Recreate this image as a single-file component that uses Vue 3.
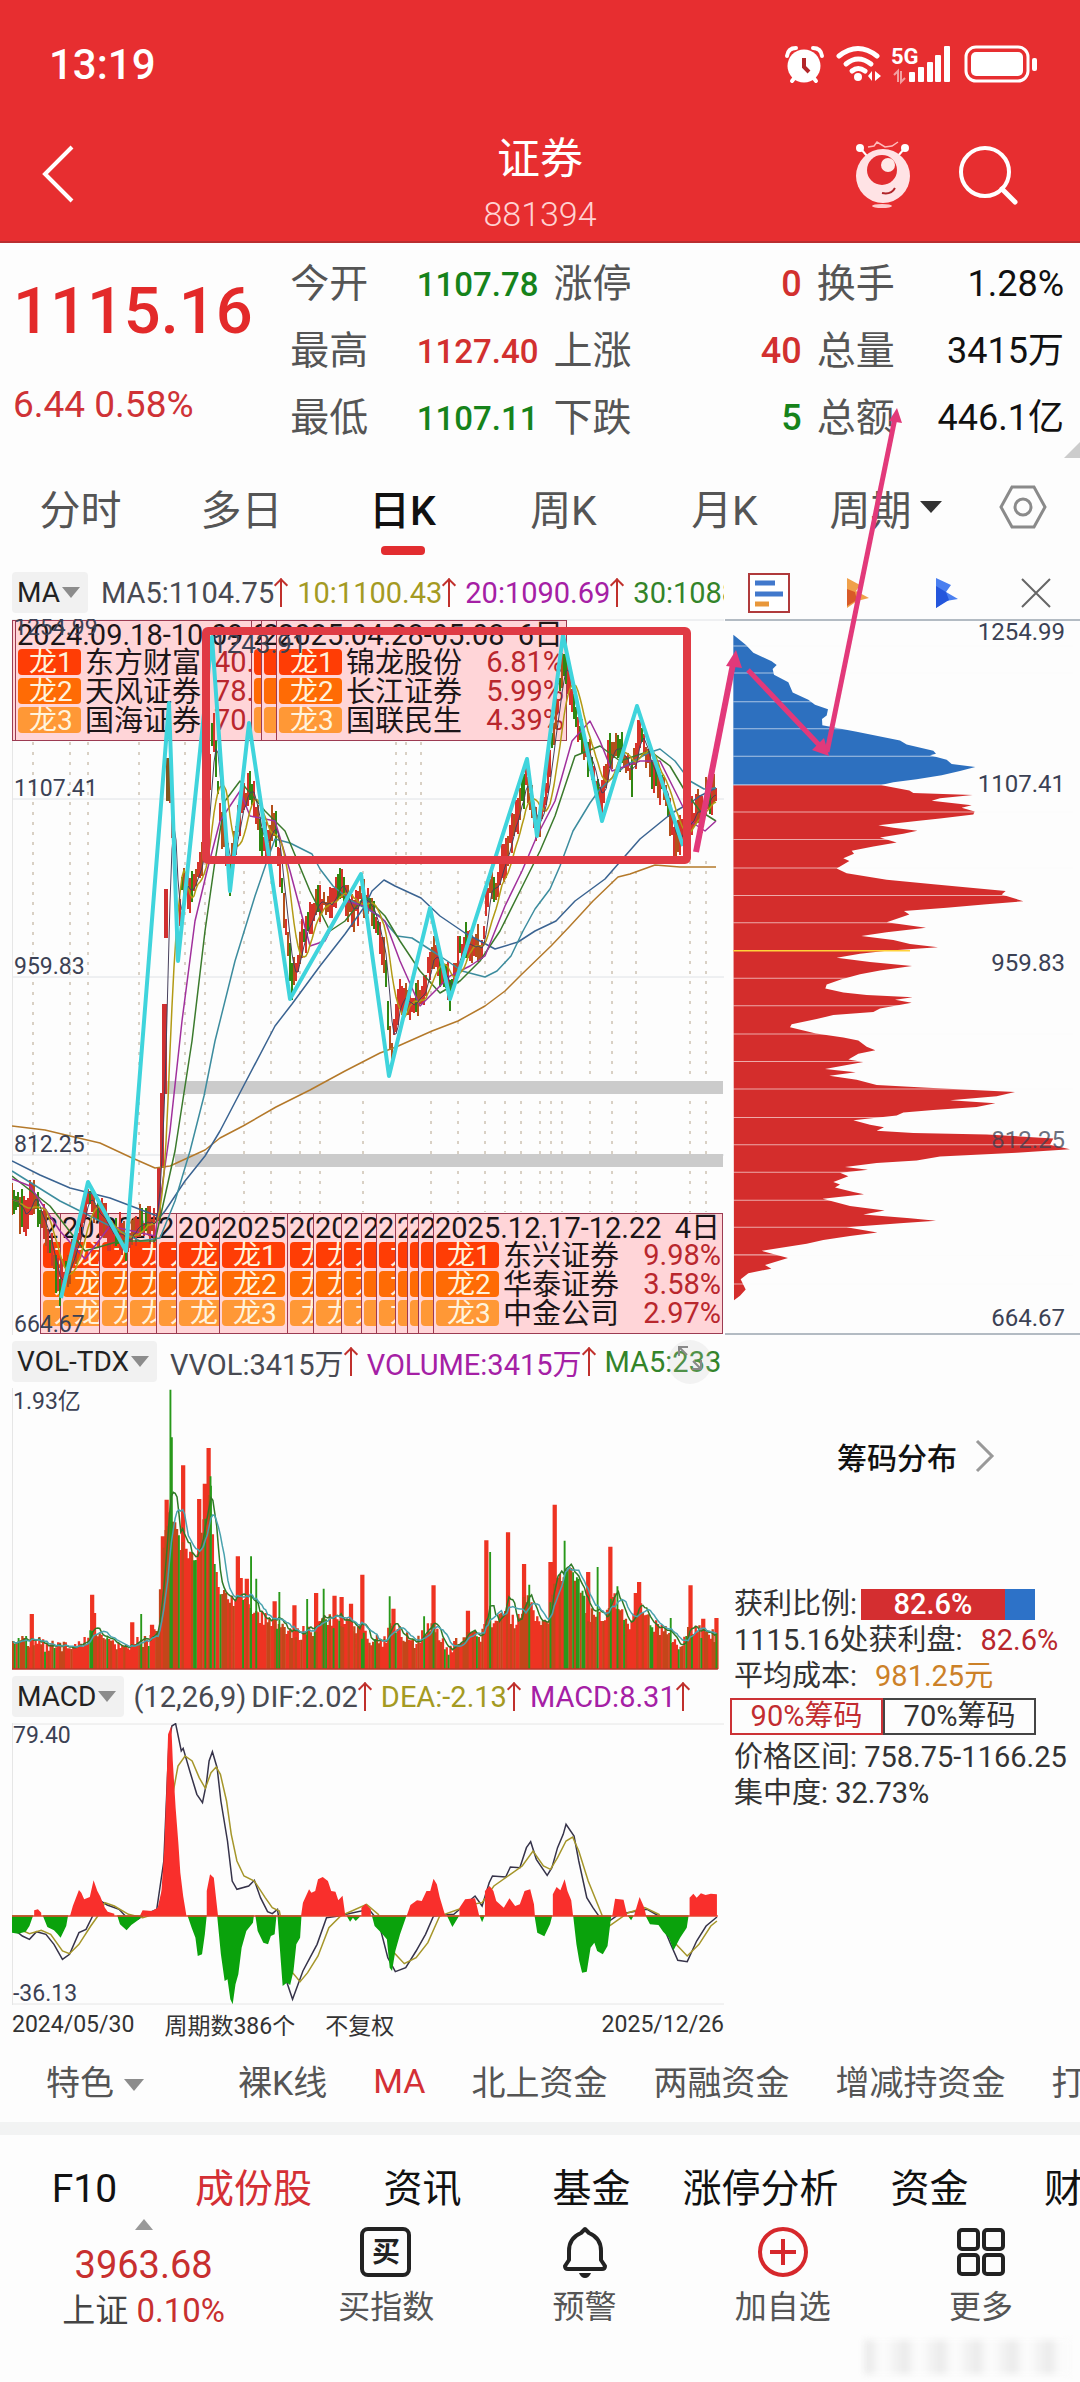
<template>
  <div class="page">
    <header class="topbar">
      <div class="status">
        <span class="clock">13:19</span>
        <svg class="status-icons" viewBox="780 40 260 46" aria-hidden="true">
          <g fill="#fff" stroke="none">
            <circle cx="802" cy="65" r="16.5" />
            <path d="M785 55q1-8 9-8M811 47q8 0 9 8M790 80l4-5M814 80l-4-5" fill="none" stroke="#fff" stroke-width="4" stroke-linecap="round" />
            <path d="M802 57v9l5 5" fill="none" stroke="#b3272a" stroke-width="4" />
            <g fill="none" stroke="#fff" stroke-width="5" stroke-linecap="round">
              <path d="M837 55q19-15 38 0" />
              <path d="M844 63q12-10 25 0" />
              <path d="M850 70q6-5 13 0" />
            </g>
            <circle cx="856" cy="76" r="4" />
            <path d="M866 75l4-5v10zM873 70v10l6-5z" />
            <path d="M892 74l4-4v11M899 70v11l4-4" fill="none" stroke="#f2a0a0" stroke-width="2" />
            <rect x="907" y="71" width="6" height="10" rx="1" />
            <rect x="916" y="66" width="6" height="15" rx="1" />
            <rect x="925" y="61" width="6" height="20" rx="1" />
            <rect x="933" y="54" width="6" height="27" rx="1" />
            <rect x="942" y="45" width="6" height="36" rx="1" />
            <rect x="964" y="46" width="62" height="34" rx="10" fill="none" stroke="#fff" stroke-width="3" />
            <rect x="969" y="51" width="52" height="24" rx="5" />
            <rect x="1030" y="57" width="5" height="13" rx="2" />
          </g>
          <text x="889" y="63" font-size="22" font-weight="700" fill="#fff">5G</text>
        </svg>
      </div>
      <nav class="titlebar">
        <button type="button" class="icon-btn" aria-label="返回">
          <svg width="36" height="60" viewBox="0 0 36 60"><path d="M31 3L4 30l27 27" fill="none" stroke="#fff" stroke-width="4" /></svg>
        </button>
        <h1 class="title">证券<small>881394</small></h1>
        <div class="title-actions">
          <button type="button" class="icon-btn" aria-label="助手">
            <svg width="58" height="72" viewBox="853 138 58 72">
              <circle cx="859" cy="148" r="4" fill="#fff" />
              <circle cx="904" cy="148" r="4" fill="#fff" />
              <path d="M860 149l6 7M903 149l-6 7" stroke="#fff" stroke-width="2" />
              <path d="M867 147l6-1 3-4 8 5 7-1 6-4" fill="none" stroke="#fbb" stroke-width="1.5" />
              <circle cx="882" cy="176" r="27" fill="#ffe3e5" />
              <circle cx="881" cy="170" r="15" fill="#e22d30" />
              <circle cx="887" cy="165" r="7" fill="#ffe9e6" />
              <path d="M881 193q9 2 13-5" fill="none" stroke="#b02428" stroke-width="2" />
              <ellipse cx="881" cy="206" rx="10" ry="2" fill="#ffc9cb" />
            </svg>
          </button>
          <button type="button" class="icon-btn" aria-label="搜索">
            <svg width="60" height="62" viewBox="957 143 60 62">
              <circle cx="984" cy="172" r="24" fill="none" stroke="#fff" stroke-width="4" />
              <path d="M1001 189l13 13" stroke="#fff" stroke-width="5" stroke-linecap="round" />
            </svg>
          </button>
        </div>
      </nav>
    </header>

    <section class="quote">
      <div class="price">
        <strong>1115.16</strong>
        <span>6.44 0.58%</span>
      </div>
      <dl v-for="(col, i) in quotes" :key="i" :class="{ large: i > 0 }">
        <div v-for="q in col" :key="q.label">
          <dt>{{ q.label }}</dt>
          <dd :class="q.tone">{{ q.value }}</dd>
        </div>
      </dl>
      <i class="corner"></i>
    </section>

    <nav class="periods">
      <button v-for="p in periods" :key="p" type="button" :class="{ active: p === period }" @click="period = p">
        {{ p }}<i v-if="p === '周期'" class="caret dark"></i>
      </button>
      <button type="button" aria-label="设置">
        <svg width="48" height="44" viewBox="0 0 48 44" fill="none" stroke="#8a8a8a" stroke-width="3">
          <path d="M13 2h22l11 20-11 20H13L2 22z" />
          <circle cx="24" cy="22" r="8" />
        </svg>
      </button>
    </nav>

    <main class="board">
      <div class="charts">
        <div class="indicator">
          <button type="button" class="chip">MA<i class="caret"></i></button>
          <span v-for="m in maValues" :key="m.text" :class="m.tone">{{ m.text }}<i class="up"></i></span>
        </div>

        <svg class="chart" viewBox="12 618 712 716" role="img" aria-label="日K">
          <path d="M12 619H724M12 798H724M12 976H724M12 1154H724" stroke="#dfe2e6" />
          <path d="M12.5 619V1334" stroke="#e6e6e6" />
          <path :d="dotted" stroke="#b5a48c" stroke-dasharray="3 7" />
          <path :d="dottedShort" stroke="#b5a48c" stroke-dasharray="3 7" />
          <rect x="165" y="1080" width="558" height="13" fill="#cbcbcb" />
          <rect x="175" y="1153" width="548" height="13" fill="#cbcbcb" />

          <svg v-for="(c, i) in cells" :key="i" :x="c.x" :y="c.y" :width="c.w" height="121">
            <rect x="0.5" y="0.5" :width="c.w - 1" height="120" fill="#ffd5d8" stroke="#9c3b52" />
            <text v-if="c.date" x="2" y="25" class="cell-date">{{ c.date }}</text>
            <text v-if="c.days" x="287" y="25" class="cell-date end">{{ c.days }}</text>
            <g v-for="(color, n) in badgeColors" :key="n">
              <rect x="3" :y="29 + n * 29" width="63" height="26" rx="4" :fill="color" />
              <text v-if="c.w > 18" x="14" :y="52 + n * 29" class="cell-badge">龙{{ c.w > 45 ? n + 1 : '' }}</text>
              <template v-if="c.rows">
                <text x="70" :y="53 + n * 29" class="cell-name">{{ c.rows[n][0] }}</text>
                <text :x="c.pctX" :y="52 + n * 29" class="cell-pct" :class="{ end: c.days }">{{ c.rows[n][1] }}</text>
              </template>
            </g>
          </svg>

          <path :d="candles.up" stroke="#d6332b" stroke-width="2" />
          <path :d="candles.mid" stroke="#b4501b" stroke-width="2" />
          <path :d="candles.down" stroke="#2f8712" stroke-width="2" />
          <g fill="#cf2f30">
            <rect x="157" y="1166" width="4" height="54" />
            <rect x="160" y="1092" width="4" height="75" />
            <rect x="162" y="1003" width="5" height="90" />
            <rect x="164" y="888" width="4" height="49" />
            <rect x="166" y="757" width="4" height="43" fill="#80561e" />
          </g>
          <g fill="none" stroke-width="1.5" stroke-linejoin="round">
            <polyline v-for="l in maLines" :key="l.color" :points="l.points" :stroke="l.color" />
            <polyline :points="ma10" stroke="#b29a14" />
            <polyline :points="ma5" stroke="#47405c" stroke-width="1" />
            <polyline
              points="61,1297 88,1181 126,1250 169,702 178,960 212,636 230,890 249,722 290,998 361,873 389,1075 430,907 450,998 527,758 537,835 563,634 602,820 637,705 683,845"
              stroke="#3fd4dc" stroke-width="4"
            />
          </g>

          <g class="axis">
            <text x="14" y="634">1254.99</text>
            <text x="14" y="795">1107.41</text>
            <text x="14" y="973">959.83</text>
            <text x="14" y="1151">812.25</text>
            <text x="14" y="1331">664.67</text>
            <text x="212" y="652" font-size="26">1243.91</text>
          </g>
          <rect x="206" y="630" width="481" height="229" rx="2" fill="none" stroke="#e03a44" stroke-width="8" />
        </svg>

        <div class="indicator">
          <button type="button" class="chip">VOL-TDX<i class="caret"></i></button>
          <span class="slate">VVOL:3415万<i class="up"></i></span>
          <span class="purple">VOLUME:3415万<i class="up"></i></span>
          <span class="green">MA5:233</span>
          <button type="button" class="expand" aria-label="全屏">
            <svg width="28" height="28" viewBox="0 0 28 28" fill="none" stroke="#888" stroke-width="2">
              <path d="M3 12V3h9M3 3l8 8M25 16v9h-9M25 25l-8-8" />
            </svg>
          </button>
        </div>

        <svg class="chart" viewBox="0 0 712 282" role="img" aria-label="成交量">
          <path d="M0.5 0V282" stroke="#e6e6e6" />
          <svg width="712" height="282" viewBox="23 170 1510 846" preserveAspectRatio="none">
            <path :d="volume.up" stroke="#ee3322" stroke-width="5" />
            <path :d="volume.mid" stroke="#c4461a" stroke-width="5" />
            <path :d="volume.down" stroke="#28981a" stroke-width="4" />
            <path d="M23 1013H1520" stroke="#b8352a" stroke-width="4" />
            <g fill="none" stroke-width="1.5">
              <polyline :points="volume.ma5" stroke="#2f7a26" vector-effect="non-scaling-stroke" />
              <polyline :points="volume.ma10" stroke="#49a2ae" vector-effect="non-scaling-stroke" />
            </g>
          </svg>
          <text x="1" y="21" class="axis">1.93亿</text>
        </svg>

        <div class="indicator">
          <button type="button" class="chip">MACD<i class="caret"></i></button>
          <span class="slate tight">(12,26,9)</span>
          <span class="slate tight">DIF:2.02<i class="up"></i></span>
          <span class="olive">DEA:-2.13<i class="up"></i></span>
          <span class="purple">MACD:8.31<i class="up"></i></span>
        </div>

        <svg class="chart" viewBox="0 0 712 282" role="img" aria-label="MACD">
          <path d="M0 1H712M0 281H712M0.5 0V282" stroke="#e6e6e6" />
          <svg width="712" height="282" viewBox="23 186 1510 846" preserveAspectRatio="none">
            <g fill="none" stroke-width="1.5">
              <polyline
                v-for="(l, i) in macdLines" :key="i" :points="l.points" :stroke="l.color"
                vector-effect="non-scaling-stroke"
              />
            </g>
            <path :d="macdRed" fill="#f92f2c" />
            <path :d="macdGreen" fill="#0aa20c" />
            <path d="M23 765H1520" stroke="#e9402c" stroke-width="5" />
          </svg>
          <g class="axis">
            <text x="1" y="20">79.40</text>
            <text x="1" y="278">-36.13</text>
          </g>
        </svg>

        <div class="dates">
          <span>2024/05/30</span>
          <span>周期数386个</span>
          <span>不复权</span>
          <span class="last">2025/12/26</span>
        </div>
      </div>

      <aside class="chips-panel">
        <div class="chip-tools">
          <button type="button" aria-label="筹码">
            <svg width="42" height="40" viewBox="0 0 42 40">
              <rect x="1" y="1" width="40" height="38" fill="#fff" stroke="#b03a3c" stroke-width="2" />
              <path d="M7 10h20M7 21h28" stroke="#4178cc" stroke-width="5" />
              <path d="M7 31h14" stroke="#e8973a" stroke-width="5" />
            </svg>
          </button>
          <button type="button" aria-label="橙色标记">
            <svg width="22" height="30" viewBox="0 0 22 30"><path d="M0 0l13 7-4 6 13 7-12 3-10 7z" fill="#f0a04a" /><path d="M0 11l8 3 2 8-10 6z" fill="#d85a28" /></svg>
          </button>
          <button type="button" aria-label="蓝色标记">
            <svg width="22" height="30" viewBox="0 0 22 30"><path d="M0 0l15 7-5 7 12 7-12 2-10 7z" fill="#4a7ff0" /><path d="M0 8l10 6 3 8-13 8z" fill="#2456dc" /></svg>
          </button>
          <button type="button" aria-label="关闭">
            <svg width="30" height="30" viewBox="0 0 30 30"><path d="M1 1l28 28M29 1L1 29" stroke="#666" stroke-width="2" /></svg>
          </button>
        </div>

        <svg class="chart" viewBox="724 618 356 716" role="img" aria-label="筹码分布">
          <path d="M725 619H1080M725 1333H1080" stroke="#9aa5b0" stroke-width="1.5" />
          <svg x="724" y="618" width="356" height="716" viewBox="72 114 1068 1403" preserveAspectRatio="none">
            <path :d="profileBlue" fill="#2d70bf" />
            <path :d="profileRed" fill="#d42d2c" />
            <path :d="profileGrid" stroke="#fdfdfd" stroke-width="2" stroke-opacity="0.6" />
            <path d="M100 764H630" stroke="#ffd23a" stroke-width="3" />
          </svg>
          <g class="axis wide end">
            <text x="1065" y="639">1254.99</text>
            <text x="1065" y="791">1107.41</text>
            <text x="1065" y="970">959.83</text>
            <text x="1065" y="1147" fill-opacity="0.75">812.25</text>
            <text x="1065" y="1325">664.67</text>
          </g>
        </svg>

        <a href="#" class="panel-link">筹码分布
          <svg width="20" height="34" viewBox="0 0 20 34"><path d="M2 2l15 15L2 32" fill="none" stroke="#999" stroke-width="3" /></svg>
        </a>

        <div class="stats">
          <p class="ratio">获利比例:<span class="bar"><b :style="{ width: profit + '%' }">{{ profit }}%</b></span></p>
          <p>1115.16处获利盘:<em class="crimson">82.6%</em></p>
          <p>平均成本:<em class="amber">981.25元</em></p>
          <div class="toggle">
            <button v-for="r in [90, 70]" :key="r" type="button" :class="{ on: r === range }" @click="range = r">{{ r }}%筹码</button>
          </div>
          <p>价格区间: 758.75-1166.25</p>
          <p>集中度: 32.73%</p>
        </div>
      </aside>
    </main>

    <nav class="features">
      <button type="button" class="first">特色<i class="caret"></i></button>
      <button v-for="f in features" :key="f" type="button" :class="{ active: f === 'MA' }">{{ f }}</button>
    </nav>

    <nav class="sections">
      <a v-for="s in sections" :key="s" href="#" :class="{ active: s === '成份股' }">{{ s }}</a>
    </nav>

    <footer class="bottom">
      <a href="#" class="index">
        <i class="tri"></i>
        <strong>3963.68</strong>
        <span>上证 <b>0.10%</b></span>
      </a>
      <button type="button">
        <svg width="52" height="52" viewBox="0 0 52 52">
          <rect x="2" y="3" width="47" height="46" rx="6" fill="none" stroke="#222" stroke-width="4" />
          <text x="26" y="36" text-anchor="middle" font-size="28" font-weight="700" fill="#222">买</text>
        </svg>
        买指数
      </button>
      <button type="button">
        <svg width="52" height="52" viewBox="0 0 52 52">
          <path d="M26 3l4 4q12 5 12 18v9l4 6q0 3-3 3H9q-3 0-3-3l4-6v-9q0-13 12-18z" fill="none" stroke="#222" stroke-width="4" stroke-linejoin="round" />
          <path d="M20 47h12q-2 5-6 5t-6-5z" fill="#222" />
        </svg>
        预警
      </button>
      <button type="button">
        <svg width="52" height="52" viewBox="0 0 52 52" fill="none" stroke="#d6282c" stroke-width="4">
          <circle cx="26" cy="26" r="23" />
          <path d="M13 26h26M26 13v26" />
        </svg>
        加自选
      </button>
      <button type="button">
        <svg width="52" height="52" viewBox="0 0 52 52" fill="none" stroke="#222" stroke-width="4">
          <rect x="4" y="4" width="19" height="19" rx="3" />
          <rect x="29" y="4" width="19" height="19" rx="3" />
          <rect x="4" y="29" width="19" height="19" rx="3" />
          <rect x="29" y="29" width="19" height="19" rx="3" />
        </svg>
        更多
      </button>
      <i class="smudge"></i>
    </footer>

    <!-- hand-drawn trend arrows lying over the page -->
    <svg class="marks" viewBox="0 0 1080 900" aria-hidden="true">
      <g fill="none" stroke="#e2397a">
        <path d="M696 852L733 664" stroke-width="6" />
        <path d="M748 670L822 748" stroke-width="5" />
        <path d="M827 752L895 418" stroke-width="5" />
      </g>
      <g fill="#e2397a">
        <path d="M736 650l6 18-16-2z" />
        <path d="M829 756l-17-6 12-12z" />
        <path d="M897 408l5 15-13-2z" />
      </g>
    </svg>
  </div>
</template>

<script setup>
import { ref } from 'vue';

const period = ref('日K');
const range = ref(90);
const profit = ref(82.6);

const periods = ['分时', '多日', '日K', '周K', '月K', '周期'];
const features = ['裸K线', 'MA', '北上资金', '两融资金', '增减持资金', '打'];
const sections = ['F10', '成份股', '资讯', '基金', '涨停分析', '资金', '财'];

const quotes = [
  [
    { label: '今开', value: '1107.78', tone: 'down' },
    { label: '最高', value: '1127.40', tone: 'rise' },
    { label: '最低', value: '1107.11', tone: 'down' }
  ],
  [
    { label: '涨停', value: '0', tone: 'rise' },
    { label: '上涨', value: '40', tone: 'rise' },
    { label: '下跌', value: '5', tone: 'down' }
  ],
  [
    { label: '换手', value: '1.28%', tone: '' },
    { label: '总量', value: '3415万', tone: '' },
    { label: '总额', value: '446.1亿', tone: '' }
  ]
];

const maValues = [
  { text: 'MA5:1104.75', tone: 'slate' },
  { text: '10:1100.43', tone: 'olive' },
  { text: '20:1090.69', tone: 'purple' },
  { text: '30:1088', tone: 'green' }
];

const badgeColors = ['#ff3d05', '#ff6b05', '#ff9836'];

// leader-board cells: later cells cover the right part of earlier ones
const topCells = [
  { x: 12, w: 4, date: '' },
  {
    x: 15, w: 237, date: '2024.09.18-10.09', pctX: 199,
    rows: [['东方财富', '40.'], ['天风证券', '78.'], ['国海证券', '70.']]
  },
  { x: 251, w: 11, date: '2' },
  { x: 261, w: 16, date: '2' },
  {
    x: 276, w: 291, date: '2025.04.28-05.08', days: '6日', pctX: 288,
    rows: [['锦龙股份', '6.81%'], ['长江证券', '5.99%'], ['国联民生', '4.39%']]
  }
];
const edges = [40, 60, 99, 127, 156, 176, 219, 287, 313, 341, 361, 376, 395, 407, 418, 433];
const bottomCells = edges.slice(0, -1).map((x, i) => {
  const w = edges[i + 1] - x + 1;
  return { x, w, date: '2025.'.slice(0, Math.max(1, Math.round(w / 15))) };
});
bottomCells.push({
  x: 433, w: 290, date: '2025.12.17-12.22', days: '4日', pctX: 288,
  rows: [['东兴证券', '9.98%'], ['华泰证券', '3.58%'], ['中金公司', '2.97%']]
});
const cells = [
  ...topCells.map(c => ({ ...c, y: 619 })),
  ...bottomCells.map(c => ({ ...c, y: 1212 }))
];

const dotted = [33, 70, 88, 139, 185, 205, 244, 271, 300, 320, 363, 431, 458, 485, 505, 521, 540, 551, 562, 590, 612, 636, 690, 706]
  .map(x => `M${x} ${x < 210 ? 741 : 860}V1211`).join('');
const dottedShort = [396, 406, 421].map(x => `M${x} 741V930`).join('');

function noise(i) {
  const v = Math.sin(i * 127.1 + 11.7) * 43758.5453;
  return v - Math.floor(v);
}

function valueAt(points, x) {
  for (let i = 1; i < points.length; i++) {
    const [x0, y0] = points[i - 1];
    const [x1, y1] = points[i];
    if (x <= x1) return y0 + ((y1 - y0) * (x - x0)) / (x1 - x0);
  }
  return points[points.length - 1][1];
}

function average(list, i, n) {
  const part = list.slice(Math.max(0, i - n + 1), i + 1);
  return part.reduce((a, b) => a + b, 0) / part.length;
}

const trend = [
  [12, 1195], [25, 1215], [33, 1190], [42, 1215], [60, 1285], [75, 1250], [88, 1195], [100, 1220], [126, 1240],
  [140, 1225], [155, 1225], [160, 1150], [165, 1000], [167, 880], [170, 780], [178, 940], [182, 880], [190, 890],
  [200, 860], [207, 830], [213, 720], [222, 830], [230, 870], [238, 820], [250, 780], [263, 850], [275, 820],
  [285, 920], [292, 985], [305, 930], [318, 900], [330, 905], [342, 880], [352, 915], [361, 895], [372, 905],
  [385, 960], [391, 1060], [397, 1000], [412, 1000], [422, 1000], [432, 950], [440, 965], [450, 990], [460, 950],
  [470, 940], [482, 950], [487, 890], [495, 890], [510, 840], [520, 800], [526, 780], [537, 830], [547, 790],
  [552, 740], [560, 690], [565, 655], [578, 730], [590, 760], [602, 800], [610, 750], [620, 750], [632, 770],
  [640, 730], [652, 770], [665, 790], [675, 840], [683, 835], [695, 815], [708, 800], [716, 790]
];

const xs = [];
for (let x = 12; x <= 716; x += 2) xs.push(x);
const closes = xs.map((x, i) => valueAt(trend, x) + (noise(i) - 0.5) * 14);

const candles = { up: '', mid: '', down: '' };
xs.forEach((x, i) => {
  if (x > 155 && x < 170) return;
  const half = 6 + noise(i + 500) * 14;
  const next = valueAt(trend, x + 3);
  const pick = noise(i + 90) + (next > closes[i] ? 0.06 : -0.16);
  const key = pick > 0.72 ? 'down' : pick > 0.42 ? 'mid' : 'up';
  candles[key] += `M${x} ${Math.round(closes[i] - half)}V${Math.round(closes[i] + half)}`;
});

const line = n => xs.map((x, i) => `${x},${Math.round(average(closes, i, n))}`).join(' ');
const ma5 = line(4);
const ma10 = line(9);

const maLines = [
  {
    color: '#b4792a',
    points: '12,1125 45,1129 70,1135 100,1142 130,1156 155,1167 170,1165 205,1149 220,1137 243,1125 276,1106 310,1089 345,1070 380,1052 396,1046 432,1030 458,1020 485,1005 505,990 521,974 551,945 570,925 593,900 618,876 630,873 655,864 680,866 716,866'
  },
  {
    color: '#3a6391',
    points: '12,1160 40,1174 70,1187 110,1197 160,1216 165,1210 185,1180 205,1155 220,1130 243,1086 275,1025 292,1003 320,965 345,933 365,905 372,890 384,879 395,885 421,897 440,915 465,932 495,948 518,941 535,930 556,920 575,900 605,878 640,838 672,812 690,802 700,795 716,787'
  },
  {
    color: '#3c8c9e',
    points: '12,1170 60,1200 100,1220 140,1240 160,1237 175,1200 190,1150 204,1095 215,1040 235,960 255,895 267,860 275,838 290,842 312,853 320,868 333,885 350,899 380,915 397,935 412,937 440,955 462,970 485,976 497,970 511,955 523,930 535,908 550,888 560,865 573,830 590,802 600,788 625,765 648,752 660,748 675,760 690,780 704,788 716,787'
  },
  {
    color: '#3b7a2c',
    points: '12,1175 50,1205 85,1250 120,1240 155,1240 175,1150 192,1040 205,930 215,860 225,800 240,780 265,810 285,830 310,890 330,930 345,920 365,895 385,915 400,940 420,970 440,992 460,980 480,960 500,930 520,890 540,850 555,815 575,755 600,745 620,760 650,750 670,765 685,790 700,810 716,820'
  },
  {
    color: '#a0309c',
    points: '12,1178 30,1185 60,1230 85,1258 110,1225 155,1235 170,1130 182,1020 195,920 207,870 220,820 240,790 250,815 275,820 290,870 310,945 325,940 345,900 365,905 385,920 400,960 420,1005 450,975 470,965 485,955 505,905 522,870 537,835 555,800 572,740 590,720 600,740 612,770 640,760 660,760 675,790 690,820 705,830 716,820'
  }
];

const volumeBase = [
  [23, 940], [65, 925], [100, 945], [150, 955], [200, 905], [235, 915], [260, 960], [300, 930], [332, 910],
  [338, 740], [345, 640], [355, 560], [370, 590], [385, 650], [395, 660], [415, 700], [432, 560], [445, 480],
  [450, 640], [460, 770], [490, 810], [525, 810], [545, 860], [580, 865], [610, 905], [650, 905], [690, 865],
  [740, 880], [780, 920], [810, 930], [830, 885], [860, 925], [885, 930], [915, 880], [935, 940], [955, 960],
  [985, 905], [1020, 920], [1030, 830], [1045, 890], [1065, 835], [1090, 880], [1115, 790], [1140, 870],
  [1160, 870], [1175, 740], [1205, 720], [1225, 760], [1245, 850], [1280, 860], [1300, 800], [1335, 880],
  [1355, 820], [1380, 880], [1415, 905], [1435, 940], [1465, 895], [1500, 910], [1520, 910]
];
const redSpikes = [
  [65, 848], [193, 790], [197, 845], [278, 873], [320, 880], [343, 615], [351, 505], [386, 402], [420, 503],
  [432, 457], [440, 350], [502, 675], [508, 740], [521, 742], [580, 810], [622, 822], [668, 785], [707, 793],
  [722, 797], [742, 817], [766, 730], [832, 832], [917, 762], [990, 838], [1029, 627], [1075, 603], [1109, 698],
  [1165, 692], [1174, 520], [1245, 722], [1292, 646], [1346, 785], [1353, 752], [1462, 762], [1489, 862], [1517, 860]
];
const greenSpikes = [
  [297, 848], [359, 175], [362, 318], [444, 435], [530, 675], [541, 742], [590, 782], [649, 803], [684, 772],
  [824, 795], [897, 855], [1037, 662], [1120, 760], [1195, 628], [1265, 707], [1307, 765], [1420, 860]
];

const volume = { up: '', mid: '', down: '', ma5: '', ma10: '' };
const volXs = [];
for (let x = 25; x <= 1518; x += 4) volXs.push(x);
const heights = volXs.map((x, i) => {
  const spike = [...redSpikes, ...greenSpikes].find(s => Math.abs(s[0] - x) <= 2);
  return spike ? (spike[1] + valueAt(volumeBase, x)) / 2 : valueAt(volumeBase, x) + (noise(i + 40) - 0.5) * 36;
});
volXs.forEach((x, i) => {
  const top = Math.round(valueAt(volumeBase, x) + (noise(i + 40) - 0.5) * 44);
  const pick = noise(i + 7) + (x > 1195 && x < 1235 ? 0.5 : 0);
  const key = pick > 0.87 ? 'down' : pick > 0.5 ? 'mid' : 'up';
  volume[key] += `M${x} ${top}V1013`;
});
redSpikes.forEach(([x, y]) => { volume.up += `M${x - 2} ${y}V1013M${x + 2} ${y}V1013`; });
greenSpikes.forEach(([x, y]) => { volume.down += `M${x} ${y}V1013`; });
volume.ma5 = volXs.map((x, i) => `${x},${Math.round(average(heights, i, 5))}`).join(' ');
volume.ma10 = volXs.map((x, i) => `${x},${Math.round(average(heights, i, 9))}`).join(' ');

const macdRed =
  'M70 765V748L78 745 85 755V765ZM146 765L152 735 165 687 170 695 176 715 188 708 196 658 204 690 210 706 220 740 226 752 240 758V765Z' +
  'M294 765L300 748 320 750 332 740 340 690 346 560 350 400 354 220 361 195 364 300 370 440 376 550 380 635 386 705 393 765Z' +
  'M436 765V690L443 640 451 650 456 715 460 765ZM636 765L640 725 653 685 658 695 666 690 672 655 682 648 693 660 700 690 709 692 715 718 724 704 730 765Z' +
  'M764 765V740L773 728 784 745V765ZM860 765L868 732 882 718 892 720 902 690 910 690 917 653 924 670 930 708 942 765Z' +
  'M972 765V740L984 715 1005 712 1014 765ZM1026 765V690L1036 675 1044 690 1050 720 1066 740 1078 712 1090 735 1100 730 1110 690 1122 685 1130 730 1132 765Z' +
  'M1170 765V700L1178 678 1186 688 1195 655 1201 690 1209 718 1213 765ZM1296 765L1302 713 1320 716 1328 765ZM1342 765L1354 708 1364 740 1368 765Z' +
  'M1460 765V710L1468 698 1475 710 1484 697 1494 702 1505 698 1518 700V765Z';
const macdGreen =
  'M23 763V815L36 818 52 812 60 795 68 763ZM88 763L98 798 112 808 120 820 126 830 138 795 142 763ZM246 763L252 790 266 808 276 792 290 778 300 763Z' +
  'M395 763L404 800 412 830 417 885 426 880 432 820 436 763ZM458 763L466 880 474 960 480 955 486 1015 491 1030 497 970 503 940 510 860 520 810 534 785 536 763Z' +
  'M539 763L544 810 556 845 566 850 572 825 580 820 584 763ZM586 763L592 880 597 975 606 965 613 972 620 930 626 850 634 830 637 763Z' +
  'M732 763L740 782 746 770 752 780 764 763ZM786 763L792 795 806 815 818 835 824 920 829 930 836 870 846 820 860 763ZM945 763L957 798 972 763Z' +
  'M1014 763L1020 784 1026 763ZM1131 763L1137 815 1152 826 1164 790 1169 763ZM1213 763L1220 850 1226 900 1232 935 1242 932 1250 860 1258 845 1264 870 1276 880 1286 855 1294 763Z' +
  'M1328 763L1336 778 1342 763ZM1366 763L1376 790 1394 792 1404 812 1416 830 1426 868 1440 830 1454 800 1458 763Z';
const macdLines = [
  {
    color: '#36334a',
    points: '23,800 45,825 60,835 75,812 95,820 112,850 130,895 145,880 165,815 180,805 194,765 205,715 225,732 250,745 270,775 290,775 305,760 330,745 345,600 356,240 362,195 370,188 382,270 386,262 400,330 415,400 427,425 435,370 441,300 448,272 458,320 466,420 480,540 490,660 500,685 525,675 537,658 550,710 565,752 575,758 586,745 595,830 605,960 618,1015 640,930 655,890 670,850 690,770 715,765 780,745 800,780 820,890 836,932 858,920 880,870 900,820 917,765 960,760 1005,705 1020,735 1035,665 1042,645 1070,648 1080,618 1100,620 1114,560 1123,542 1135,595 1158,643 1168,620 1180,560 1192,520 1198,490 1215,525 1225,600 1242,710 1255,740 1270,770 1290,780 1310,760 1370,745 1395,765 1420,850 1435,898 1455,902 1475,840 1495,795 1518,768'
  },
  {
    color: '#a5962a',
    points: '23,795 60,818 85,808 105,820 130,870 145,878 165,850 190,795 205,765 220,725 240,735 270,760 300,770 335,755 352,600 364,400 375,315 390,285 405,300 420,350 433,382 445,335 456,318 465,340 478,420 488,520 500,600 515,645 537,660 560,710 575,740 590,750 605,860 618,935 634,962 650,935 672,885 695,800 720,765 775,730 800,760 830,870 855,908 880,890 905,845 930,765 1000,730 1020,725 1045,675 1080,640 1105,615 1128,570 1150,615 1165,625 1180,590 1198,540 1212,528 1225,570 1245,660 1265,730 1285,800 1300,785 1330,755 1365,740 1395,760 1425,840 1455,885 1480,850 1505,795 1518,780'
  }
];

const profileBlue =
  'M100 440V145L138 165 160 180 215 197 230 204 218 212 222 223 265 238 278 258 325 272 345 282 384 291 380 303 366 310 367 322 470 335 600 352 620 360 700 372 708 378 690 381 740 390 755 398 826 404 780 412 725 420 650 428 580 434 540 440Z';
const profileRed =
  'M100 440H545L628 450 640 455 818 459 720 465 695 470 815 479 785 484 824 491 820 497 720 505 650 510 535 518 580 523 652 529 610 535 540 542 590 552 520 560 455 568 462 574 430 583 448 588 410 603 440 612 560 625 700 634 820 641 917 647 905 654 970 667 860 673 740 680 612 686 628 693 560 708 678 719 560 728 484 735 580 743 630 751 714 757 560 764 480 770 410 778 510 786 636 794 540 803 480 810 425 820 380 830 376 838 430 846 500 851 638 855 585 860 635 866 540 877 520 884 400 890 350 898 275 908 270 914 348 926 430 934 475 940 500 952 526 959 475 966 445 977 490 982 375 996 467 1002 388 1009 470 1017 530 1027 670 1032 820 1037 945 1041 890 1049 750 1057 886 1063 830 1070 700 1076 610 1081 590 1087 460 1096 510 1105 552 1110 530 1117 640 1121 860 1124 1060 1132 1050 1144 1110 1153 950 1160 720 1167 650 1175 530 1180 435 1188 504 1193 420 1199 445 1206 400 1217 420 1222 405 1228 460 1237 492 1241 368 1250 450 1264 554 1273 490 1281 630 1288 708 1293 600 1298 440 1306 532 1316 450 1323 370 1331 320 1338 185 1352 264 1366 195 1380 214 1387 145 1396 122 1408 137 1428 120 1440 102 1449Z';
const profileGrid = [167, 220, 276, 329, 383, 439, 492, 546, 602, 656, 709, 818, 872, 927, 981, 1035, 1091, 1144, 1198, 1253, 1306, 1360, 1417]
  .map(y => `M100 ${y}H1120`).join('');
</script>

<style>
body {
  margin: 0;
  background: #fdfdfd;
}
</style>

<style scoped>
.page {
  position: relative;
  overflow: hidden;
  background: #fdfdfd;
  color: #333;
  font-family: Roboto, 'Noto Sans CJK SC', sans-serif;
}
button {
  padding: 0;
  border: 0;
  background: none;
  color: inherit;
  font: inherit;
  cursor: pointer;
}
a {
  color: inherit;
  text-decoration: none;
}
.topbar {
  background: #e72e30;
  border-bottom: 2px solid #b92e30;
  color: #fff;
}
.status {
  display: flex;
  align-items: center;
  justify-content: space-between;
  height: 128px;
  padding: 0 38px 0 49px;
}
.clock {
  font-size: 42px;
  font-weight: 500;
}
.status-icons {
  width: 260px;
  height: 46px;
}
.titlebar {
  display: grid;
  grid-template-columns: 1fr auto 1fr;
  align-items: start;
  height: 113px;
  padding: 0 62px 0 41px;
}
.icon-btn {
  display: flex;
  align-items: center;
  height: 92px;
}
.title {
  margin: 0 0 0 21px;
  font-size: 43px;
  font-weight: 400;
  line-height: 62px;
  text-align: center;
}
.title small {
  display: block;
  color: #ffd2d2;
  font-size: 34px;
  font-weight: 300;
  line-height: 48px;
}
.title-actions {
  display: flex;
  justify-content: flex-end;
  gap: 46px;
}

.quote {
  position: relative;
  display: grid;
  grid-template-columns: 262fr 248fr 248fr 247fr;
  column-gap: 15px;
  box-sizing: border-box;
  height: 215px;
  padding: 8px 16px 0 13px;
}
.price {
  color: #e32a2a;
}
.price strong {
  display: block;
  margin: 20px 0 34px;
  font-size: 65px;
  font-weight: 500;
  line-height: 80px;
}
.price span {
  display: block;
  color: #cf3236;
  font-size: 37px;
  line-height: 40px;
}
dl {
  margin: 0;
}
dl div {
  display: flex;
  align-items: center;
  justify-content: space-between;
  height: 67px;
}
dt {
  color: #555;
  font-size: 39px;
  line-height: 67px;
}
dd {
  margin: 0;
  color: #111;
  font-size: 33px;
  font-weight: 500;
  line-height: 67px;
}
.large dd {
  font-size: 36px;
}
.large dd:not([class*='rise'], [class*='down']) {
  font-weight: 400;
}
dd.rise {
  color: #d2302f;
}
dd.down {
  color: #16831a;
}
.corner {
  position: absolute;
  right: 0;
  bottom: 0;
  border: 8px solid transparent;
  border-right-color: #ccc;
  border-bottom-color: #ccc;
}

.periods {
  display: grid;
  grid-template-columns: repeat(6, 161fr) 114fr;
  height: 104px;
}
.periods button {
  position: relative;
  display: flex;
  align-items: center;
  justify-content: center;
  padding-bottom: 6px;
  color: #555;
  font-size: 41px;
}
.periods .active {
  color: #111;
  font-weight: 500;
}
.periods .active::after {
  content: '';
  position: absolute;
  bottom: 7px;
  left: 50%;
  width: 44px;
  height: 9px;
  margin-left: -22px;
  border-radius: 4px;
  background: #e22d30;
}
.caret {
  flex: none;
  margin-left: 2px;
  border: 9px solid transparent;
  border-top: 11px solid #8c8c8c;
  border-bottom: 0;
}
.caret.dark {
  margin-left: 8px;
  border-width: 12px 11px 0;
  border-top-color: #333;
}

.board {
  display: grid;
  grid-template-columns: 712fr 356fr;
  padding-left: 12px;
}
.charts,
.chips-panel {
  min-width: 0;
}
.chart {
  display: block;
  width: 100%;
}
.indicator {
  position: relative;
  display: flex;
  align-items: center;
  gap: 9px;
  box-sizing: border-box;
  height: 53px;
  overflow: hidden;
  font-size: 29px;
  white-space: nowrap;
}
.indicator:first-child {
  height: 57px;
  padding-top: 4px;
}
.indicator > span {
  display: flex;
  align-items: center;
}
.chip {
  display: flex;
  align-items: center;
  height: 41px;
  margin-right: 4px;
  padding: 0 8px 0 5px;
  border-radius: 4px;
  background: #f1f1f1;
  color: #222;
  font-size: 28px;
}
.indicator .tight {
  margin-left: -4px;
}
.up {
  position: relative;
  width: 2px;
  height: 28px;
  margin: 0 6px;
  background: #c0302c;
}
.up::before {
  content: '';
  position: absolute;
  top: 1px;
  left: -4px;
  width: 8px;
  height: 8px;
  border: solid #c0302c;
  border-width: 2px 0 0 2px;
  transform: rotate(45deg);
}
.slate {
  color: #484a52;
}
.olive {
  color: #a49a22;
}
.purple {
  color: #a520a5;
}
.green {
  color: #33842a;
}
.expand {
  position: absolute;
  right: 12px;
  width: 44px;
  height: 44px;
  border-radius: 50%;
  background: rgba(200, 200, 200, 0.2);
}
.cell-date,
.cell-name {
  fill: #1c1618;
  font-size: 29px;
}
.cell-badge {
  fill: #fff3dc;
  font-size: 28px;
}
.cell-pct {
  fill: #b9272d;
  font-size: 29px;
}
.end {
  text-anchor: end;
}
.axis {
  fill: #3b4154;
  font-size: 23px;
}
.axis.wide {
  font-size: 24px;
}
.dates {
  display: flex;
  align-items: center;
  gap: 30px;
  height: 38px;
  font-size: 23px;
}
.dates .last {
  margin-left: auto;
}

.chip-tools {
  display: grid;
  grid-template-columns: repeat(4, 1fr);
  box-sizing: border-box;
  height: 57px;
  padding-top: 4px;
}
.chip-tools button {
  display: flex;
  align-items: center;
  justify-content: center;
}
.panel-link {
  display: flex;
  align-items: center;
  gap: 18px;
  height: 40px;
  margin: 101px 0 110px 113px;
  color: #111;
  font-size: 30px;
  font-weight: 500;
}
.stats {
  padding-left: 10px;
  font-size: 29px;
  white-space: nowrap;
}
.stats p {
  margin: 0;
  line-height: 36px;
}
.stats em {
  margin-left: 18px;
  font-style: normal;
}
.crimson {
  color: #b8272c;
}
.amber {
  color: #cc8128;
}
.ratio {
  display: flex;
  align-items: center;
}
.bar {
  flex: 1;
  display: flex;
  height: 31px;
  margin: 0 45px 0 4px;
  background: #2d72c8;
}
.bar b {
  background: #d42e30;
  color: #fff;
  font-weight: 500;
  line-height: 31px;
  text-align: center;
}
.toggle {
  display: grid;
  grid-template-columns: 1fr 1fr;
  margin: 4px 44px 4px -4px;
}
.toggle button {
  height: 37px;
  border: 2px solid #444;
  line-height: 33px;
}
.toggle .on {
  border-color: #cc3236;
  color: #c22c30;
}

.features {
  display: flex;
  align-items: center;
  gap: 46px;
  box-sizing: border-box;
  height: 92px;
  padding: 0 0 4px 46px;
  overflow: hidden;
  border-bottom: 13px solid #f2f3f3;
  color: #555;
  font-size: 34px;
  white-space: nowrap;
}
.features button {
  flex: none;
}
.features .first {
  display: flex;
  align-items: center;
  margin-right: 48px;
}
.features .caret {
  margin: 8px 0 0 10px;
  border-width: 12px 10px 0;
}
.features .active {
  color: #d43035;
}

.sections {
  display: grid;
  grid-auto-flow: column;
  grid-auto-columns: 15.65%;
  height: 60px;
  padding-top: 24px;
  overflow: hidden;
  color: #111;
  font-size: 39px;
  line-height: 60px;
  text-align: center;
  white-space: nowrap;
}
.sections .active {
  color: #d43035;
}
.sections a:last-child {
  padding-left: 30px;
  text-align: left;
}

.bottom {
  position: relative;
  display: grid;
  grid-template-columns: 287fr repeat(4, 198fr);
  padding-bottom: 50px;
}
.bottom button {
  display: flex;
  flex-direction: column;
  align-items: center;
  gap: 9px;
  padding-top: 7px;
  color: #555;
  font-size: 32px;
  line-height: 40px;
}
.index {
  display: flex;
  flex-direction: column;
  align-items: center;
  color: #c8302f;
}
.tri {
  margin-bottom: 12px;
  border: 9px solid transparent;
  border-top: 0;
  border-bottom: 11px solid #999;
}
.index strong {
  font-size: 38px;
  font-weight: 400;
  line-height: 46px;
}
.index span {
  color: #444;
  font-size: 33px;
  line-height: 46px;
}
.index b {
  color: #c8302f;
  font-weight: 400;
}
.smudge {
  position: absolute;
  right: 10px;
  bottom: 10px;
  width: 206px;
  height: 34px;
  background: repeating-linear-gradient(90deg, #ececec 0 8px, #fbfbfb 14px 24px, #f2f2f2 30px 36px);
  filter: blur(3px);
}
.marks {
  position: absolute;
  top: 0;
  left: 0;
  width: 100%;
  pointer-events: none;
}
</style>
